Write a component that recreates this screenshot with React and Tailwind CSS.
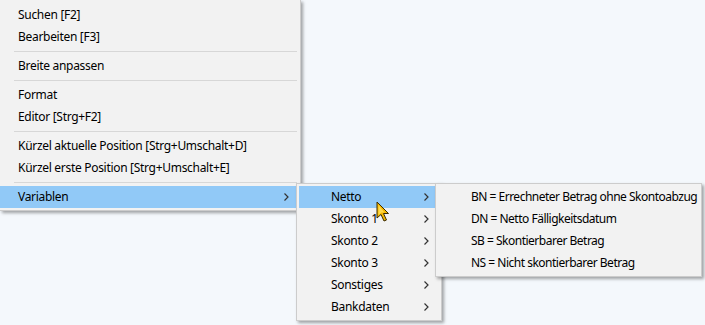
const font = { fontFamily: '"Noto Sans", "Open Sans", sans-serif' };

function Chevron() {
	return (
		<svg width="5" height="8" viewBox="0 0 5 8" className="block">
			<polyline points="0.5,0.5 4,4 0.5,7.5" fill="none" stroke="#333" strokeWidth="1.2" />
		</svg>
	);
}

function Separator() {
	return (
		<div className="h-[7px] flex items-center pl-[14px] pr-[3px]">
			<div className="h-px w-full bg-[#d7d7d7]"></div>
		</div>
	);
}

function MainItem({ label, active, arrow }) {
	let className = "h-[22px] flex items-center pl-[18px] pr-[11px]";
	className += active ? " bg-[#91c9f7]" : "";
	return (
		<div className={className}>
			<span className="flex-1">{label}</span>
			{arrow && <Chevron />}
		</div>
	);
}

function SubItem({ label, active }) {
	let className = "h-[22px] flex items-center pl-[32px] pr-[10px]";
	className += active ? " bg-[#91c9f7]" : "";
	return (
		<div className={className}>
			<span className="flex-1">{label}</span>
			<Chevron />
		</div>
	);
}

function Cursor() {
	return (
		<svg width="14" height="22" viewBox="0 0 14 22" className="absolute left-[376px] top-[201px]">
			<path d="M1 1 L1 17 L5 13.5 L8 20 L10.5 19 L7.5 12.5 L12.5 12.5 Z" fill="#f5b800" stroke="#3a2a00" strokeWidth="1" strokeLinejoin="round" />
			<path d="M2.5 4 L2.5 14 L5.5 11.5 L8.5 11.5 Z" fill="#ffd94a" />
		</svg>
	);
}

export default function App() {
	const subItems = ["Netto", "Skonto 1", "Skonto 2", "Skonto 3", "Sonstiges", "Bankdaten"];
	const nettoItems = [
		"BN = Errechneter Betrag ohne Skontoabzug",
		"DN = Netto Fälligkeitsdatum",
		"SB = Skontierbarer Betrag",
		"NS = Nicht skontierbarer Betrag",
	];

	return (
		<div className="relative w-[705px] h-[325px] overflow-hidden bg-[#f4f8fc] text-[12px] tracking-[-0.3px] whitespace-nowrap text-black leading-none" style={font}>
			<div className="w-[301px] bg-[#f2f2f2] border-r border-b border-[#cccccc] pt-[4px] pb-[2px] shadow-[2px_2px_3px_rgba(0,0,0,0.35)]">
				<MainItem label="Suchen [F2]" />
				<MainItem label="Bearbeiten [F3]" />
				<Separator />
				<MainItem label="Breite anpassen" />
				<Separator />
				<MainItem label="Format" />
				<MainItem label="Editor [Strg+F2]" />
				<Separator />
				<MainItem label="Kürzel aktuelle Position [Strg+Umschalt+D]" />
				<MainItem label="Kürzel erste Position [Strg+Umschalt+E]" />
				<Separator />
				<MainItem label="Variablen" active arrow />
			</div>

			<div className="absolute left-[296px] top-[183px] w-[146px] bg-[#f2f2f2] border border-[#cccccc] p-[2px] shadow-[2px_2px_3px_rgba(0,0,0,0.35)]">
				{subItems.map((item, k) => (
					<SubItem key={k} label={item} active={k === 0} />
				))}
			</div>

			<div className="absolute left-[435px] top-[183px] w-[267px] bg-[#f2f2f2] border border-[#cccccc] p-[2px] tracking-[-0.5px] shadow-[2px_2px_3px_rgba(0,0,0,0.35)]">
				{nettoItems.map((item, k) => (
					<div key={k} className="h-[22px] flex items-center pl-[33px]">{item}</div>
				))}
			</div>

			<Cursor />
		</div>
	);
}
